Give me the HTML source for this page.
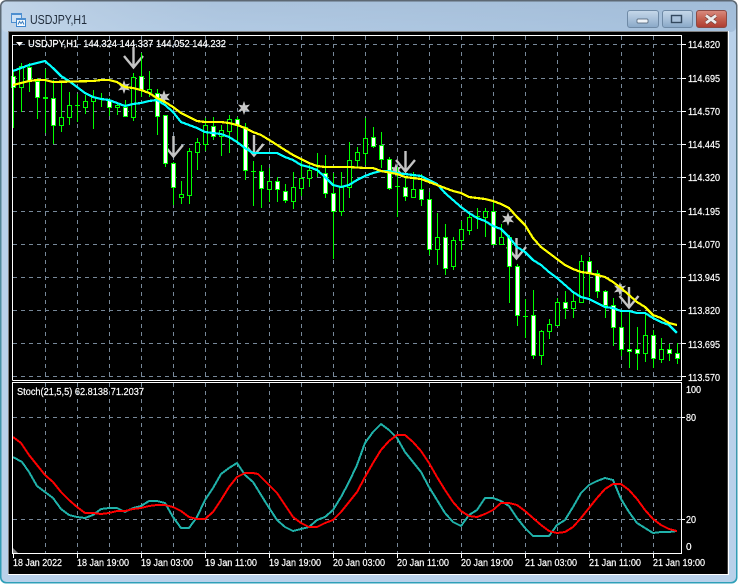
<!DOCTYPE html>
<html><head><meta charset="utf-8"><title>USDJPY,H1</title>
<style>
html,body{margin:0;padding:0;background:#fff;width:739px;height:584px;overflow:hidden}
svg{display:block}
text{font-family:"Liberation Sans",sans-serif;font-size:10px;fill:#fff;stroke:#fff;stroke-width:.2}
.g{stroke:#778899;stroke-width:1;stroke-dasharray:4 4;fill:none;shape-rendering:crispEdges}
</style></head><body>
<svg width="739" height="584" viewBox="0 0 739 584" xmlns="http://www.w3.org/2000/svg">
<defs>
<linearGradient id="tb" x1="0" y1="0" x2="0" y2="1"><stop offset="0" stop-color="#a9c1da"/><stop offset=".06" stop-color="#aec5de"/><stop offset="1" stop-color="#b9d1ea"/></linearGradient>
<linearGradient id="ti" x1="0" y1="0" x2="1" y2="0"><stop offset="0" stop-color="#c6d8ea" stop-opacity=".8"/><stop offset=".3" stop-color="#a9c2dc" stop-opacity=".5"/><stop offset="1" stop-color="#9db9d6" stop-opacity=".7"/></linearGradient>
<linearGradient id="bb" x1="0" y1="0" x2="0" y2="1"><stop offset="0" stop-color="#c6d8ea"/><stop offset=".5" stop-color="#a9c1da"/><stop offset="1" stop-color="#89a8c8"/></linearGradient>
<linearGradient id="cb" x1="0" y1="0" x2="0" y2="1"><stop offset="0" stop-color="#d98c80"/><stop offset=".5" stop-color="#c4604f"/><stop offset="1" stop-color="#ad3c30"/></linearGradient>
<linearGradient id="ed" x1="0" y1="0" x2="0" y2="1"><stop offset="0" stop-color="#5d6873"/><stop offset=".5" stop-color="#4f8ea0"/><stop offset="1" stop-color="#2f9fb8"/></linearGradient>
<polygon id="s" fill="#c8c8c8" points="0,-7 1.5,-2.6 6.06,-3.5 3,0 6.06,3.5 1.5,2.6 0,7 -1.5,2.6 -6.06,3.5 -3,0 -6.06,-3.5 -1.5,-2.6"/>
<path id="a" fill="none" stroke="#c4c4c4" stroke-width="2.4" d="M0 0V20M-9.5 9L0 20.5L9.5 9"/>
</defs>

<rect x="0" y="0" width="737.5" height="583.5" rx="6" fill="url(#ed)"/>
<rect x="1.500" y="1.500" width="734.500" height="580.500" rx="5" fill="#b9d1ea"/>
<rect x="1.500" y="1.500" width="734.500" height="30.500" rx="5" fill="url(#tb)"/>
<rect x="1.500" y="1.500" width="734.500" height="30.500" rx="5" fill="url(#ti)"/>

<!-- title icon -->
<g>
<rect x="11.5" y="13.5" width="10" height="9" fill="#cfe2f5" stroke="#4d8fd0"/>
<rect x="11" y="13" width="11" height="2" fill="#4d8fd0"/>
<rect x="16.5" y="18.5" width="9" height="8" fill="#f5fafe" stroke="#3d86cf"/>
<rect x="16" y="18" width="10" height="2" fill="#4d8fd0"/>
<path d="M18 24.5l1.5-3 1.5 2 1.5-2 1.5 3" fill="none" stroke="#3a7dbe" stroke-width="1"/>
</g>
<text x="30" y="24" style="font-size:12.5px;fill:#1f2b3a;stroke:none" textLength="57" lengthAdjust="spacingAndGlyphs">USDJPY,H1</text>

<!-- buttons -->
<rect x="627.5" y="10.5" width="31" height="17" rx="2.5" fill="url(#bb)" stroke="#6f8aa6"/>
<rect x="637" y="19" width="11" height="4" rx="1" fill="#eef3f8" stroke="#44586c" stroke-width=".7"/>
<rect x="662.5" y="10.5" width="30" height="17" rx="2.5" fill="url(#bb)" stroke="#6f8aa6"/>
<rect x="671.5" y="15.5" width="10" height="7" fill="#a9c1da" stroke="#33485e" stroke-width="1.4"/>
<rect x="696.5" y="10.5" width="30" height="17" rx="2.5" fill="url(#cb)" stroke="#8c4a44"/>
<path d="M706 15.500l10 7.500M716 15.500l-10 7.500" stroke="#6e3a36" stroke-width="4"/>
<path d="M706 15.500l10 7.500M716 15.500l-10 7.500" stroke="#ececec" stroke-width="2.8"/>

<!-- client area -->
<rect x="8" y="31" width="721" height="544" fill="#fff"/>
<rect x="8" y="31" width="720" height="543" fill="#808080"/>
<rect x="9" y="32" width="718.5" height="542" fill="#000"/>

<!-- grids -->
<path class="g" d="M13 44.500H681M13 78.500H681M13 111.500H681M13 144.500H681M13 177.500H681M13 211.500H681M13 244.500H681M13 277.500H681M13 310.500H681M13 343.500H681M13 376.500H681"/>
<path class="g" d="M45.500 36V380M77.500 36V380M109.500 36V380M141.500 36V380M173.500 36V380M205.500 36V380M237.500 36V380M269.500 36V380M301.500 36V380M333.500 36V380M365.500 36V380M397.500 36V380M429.500 36V380M461.500 36V380M493.500 36V380M525.500 36V380M557.500 36V380M589.500 36V380M621.500 36V380M653.500 36V380"/>
<path class="g" d="M13 417.500H681M13 519.500H681"/>
<path class="g" d="M45.500 383V553M77.500 383V553M109.500 383V553M141.500 383V553M173.500 383V553M205.500 383V553M237.500 383V553M269.500 383V553M301.500 383V553M333.500 383V553M365.500 383V553M397.500 383V553M429.500 383V553M461.500 383V553M493.500 383V553M525.500 383V553M557.500 383V553M589.500 383V553M621.500 383V553M653.500 383V553"/>

<!-- arrows and stars -->
<use href="#a" x="133.500" y="47"/><use href="#a" x="173.500" y="136"/><use href="#a" x="254" y="135"/><use href="#a" x="405.500" y="151"/><use href="#a" x="516.500" y="238"/><use href="#a" x="629" y="287"/>
<use href="#s" x="124" y="87"/><use href="#s" x="164" y="97"/><use href="#s" x="244" y="108"/><use href="#s" x="396" y="170"/><use href="#s" x="508" y="219"/><use href="#s" x="620" y="289"/>

<!-- wicks -->
<path fill="none" stroke="#00ff00" stroke-width="1" shape-rendering="crispEdges" d="M13.500 70V128M21.500 63V112M29.500 63V92M37.500 78V119M45.500 69V133M53.500 80V144M61.500 82V132M69.500 92V125M77.500 94V122M85.500 95V114M93.500 90V129M101.500 93V107M109.500 98V116M117.500 103V115M125.500 100V117M133.500 73V121M141.500 53V97M149.500 71V97M157.500 89V135M165.500 115V167M173.500 162V205M181.500 181V204M189.500 148V204M197.500 138V170M205.500 118V151M213.500 117V140M221.500 125V156M229.500 115V153M237.500 117V144M245.500 123V180M253.500 161V206M261.500 165V208M269.500 168V202M277.500 177V202M285.500 184V203M293.500 172V209M301.500 160V196M309.500 165V187M317.500 153V177M325.500 155V198M333.500 173V259M341.500 172V216M349.500 142V198M357.500 147V168M365.500 118V165M373.500 127V148M381.500 132V168M389.500 157V190M397.500 167V217M405.500 177V201M413.500 172V197M421.500 174V206M429.500 192V255M437.500 213V265M445.500 224V275M453.500 237V270M461.500 221V250M469.500 212V235M477.500 208V229M485.500 208V237M493.500 202V245M501.500 224V245M509.500 235V303M517.500 264V326M525.500 299V338M533.500 290V359M541.500 330V365M549.500 319V339M557.500 298V325M565.500 291V319M573.500 293V318M581.500 255V303M589.500 257V297M597.500 270V298M605.500 290V318M613.500 298V346M621.500 310V356M629.500 311V368M637.500 327V370M645.500 313V362M653.500 330V368M661.500 338V363M669.500 344V361M677.500 343V364"/>

<!-- hollow bodies -->
<path fill="#000" stroke="#00ff00" stroke-width="1" shape-rendering="crispEdges" d="M19.500 66.500h4V87.500h-4zM59.500 117.500h4V125.500h-4zM67.500 105.500h4V117.500h-4zM83.500 101.500h4V107.500h-4zM91.500 97.500h4V101.500h-4zM115.500 105.500h4V107.500h-4zM131.500 77.500h4V117.500h-4zM147.500 89.500h4V92.500h-4zM179.500 194.500h4V197.500h-4zM187.500 151.500h4V195.500h-4zM195.500 142.500h4V152.500h-4zM203.500 125.500h4V144.500h-4zM219.500 130.500h4V136.500h-4zM227.500 119.500h4V131.500h-4zM267.500 181.500h4V189.500h-4zM291.500 187.500h4V201.500h-4zM299.500 178.500h4V188.500h-4zM307.500 170.500h4V178.500h-4zM339.500 187.500h4V211.500h-4zM347.500 160.500h4V187.500h-4zM355.500 152.500h4V160.500h-4zM363.500 138.500h4V153.500h-4zM411.500 189.500h4V197.500h-4zM435.500 237.500h4V249.500h-4zM451.500 240.500h4V266.500h-4zM459.500 229.500h4V240.500h-4zM467.500 217.500h4V230.500h-4zM483.500 211.500h4V217.500h-4zM499.500 237.500h4V244.500h-4zM539.500 331.500h4V355.500h-4zM547.500 324.500h4V331.500h-4zM555.500 302.500h4V325.500h-4zM571.500 301.500h4V308.500h-4zM579.500 261.500h4V302.500h-4zM643.500 335.500h4V353.500h-4zM659.500 349.500h4V359.500h-4z"/>

<!-- filled bodies -->
<path fill="#fff" stroke="#00ff00" stroke-width="1" shape-rendering="crispEdges" d="M11.500 76.500h4V87.500h-4zM27.500 67.500h4V80.500h-4zM35.500 81.500h4V97.500h-4zM43.500 97.500h4V98.500h-4zM51.500 98.500h4V125.500h-4zM107.500 100.500h4V107.500h-4zM123.500 107.500h4V116.500h-4zM139.500 76.500h4V90.500h-4zM155.500 93.500h4V116.500h-4zM163.500 115.500h4V163.500h-4zM171.500 163.500h4V187.500h-4zM211.500 126.500h4V136.500h-4zM235.500 119.500h4V125.500h-4zM243.500 127.500h4V170.500h-4zM259.500 171.500h4V188.500h-4zM275.500 181.500h4V189.500h-4zM283.500 191.500h4V200.500h-4zM323.500 173.500h4V193.500h-4zM331.500 193.500h4V211.500h-4zM371.500 137.500h4V146.500h-4zM379.500 145.500h4V159.500h-4zM387.500 159.500h4V188.500h-4zM403.500 187.500h4V196.500h-4zM419.500 189.500h4V199.500h-4zM427.500 199.500h4V249.500h-4zM443.500 237.500h4V268.500h-4zM491.500 211.500h4V244.500h-4zM507.500 237.500h4V266.500h-4zM515.500 266.500h4V315.500h-4zM531.500 315.500h4V355.500h-4zM563.500 302.500h4V308.500h-4zM587.500 261.500h4V273.500h-4zM595.500 273.500h4V291.500h-4zM603.500 291.500h4V305.500h-4zM611.500 305.500h4V327.500h-4zM619.500 327.500h4V349.500h-4zM627.500 349.500h4V351.500h-4zM635.500 349.500h4V353.500h-4zM651.500 335.500h4V358.500h-4zM667.500 349.500h4V353.500h-4zM675.500 353.500h4V358.500h-4z"/>
<path stroke="#00ff00" stroke-width="1" fill="none" shape-rendering="crispEdges" d="M75 105.500h5M251 171.500h5M315 170.500h5M395 186.500h5M475 216.500h5M523 316.500h5"/>

<!-- MA lines -->
<polyline fill="none" stroke="#00ffff" stroke-width="2.2" shape-rendering="crispEdges" points="13,71 21,68 29,65 37,63 45,61 53,68 61,76 69,81 77,87 85,93 93,97 101,99 109,100 117,103 125,106 133,104 141,103 149,101 157,100 165,105 173,112 181,122 189,125 197,128 205,132 213,133 221,134 229,137 237,142 245,148 253,153 261,153 277,153 285,157 293,160 301,165 309,167 317,170 325,177 333,185 341,187 349,185 357,180 365,176 373,173 381,171 389,171 397,173 405,174 413,175 421,176 429,180 437,184 445,193 453,200 461,207 469,213 477,218 485,221 493,226 501,229 509,237 517,247 525,252 533,260 541,265 549,272 557,278 565,285 573,292 581,297 589,299 597,303 605,307 613,308 621,311 629,311 637,313 645,313 653,318 661,322 669,325 677,333"/>
<polyline fill="none" stroke="#ffff00" stroke-width="2.2" shape-rendering="crispEdges" points="13,85 21,83 29,81 37,80 45,80 53,82 93,81 101,80 109,80 117,82 125,87 133,88 141,90 149,93 157,98 165,102 173,107 181,113 189,117 197,121 205,122 221,122 229,123 237,125 245,128 253,132 261,135 266,138 274,143 285,150 293,155 301,159 309,163 317,166 325,167 349,167 365,168 373,168 381,171 397,174 405,177 421,179 429,182 437,185 445,188 453,191 461,193 469,197 477,198 485,199 493,201 501,204 509,208 517,217 525,225 533,238 541,247 549,253 557,259 565,265 573,269 581,272 589,273 597,275 605,277 613,282 621,288 629,295 637,302 645,307 653,315 661,318 669,323 677,325"/>

<!-- Stochastic -->
<polyline fill="none" stroke="#20b2aa" stroke-width="2" shape-rendering="crispEdges" points="13,457 22,462 29,472 37,486 45,492 53,498 61,509 69,515 77,517 85,518 93,515 101,509 109,508 117,508 125,512 133,508 141,506 149,501 157,501 165,503 173,517 181,528 189,528 197,517 205,500 213,488 221,474 229,468 237,463 245,475 253,482 258,490 266,503 277,520 285,527 293,531 301,529 309,527 317,520 325,517 333,510 341,497 349,482 357,465 365,443 373,432 381,424 389,430 397,438 405,452 413,462 421,472 429,487 437,500 445,513 453,522 461,526 469,515 477,510 485,498 493,498 501,501 509,506 517,518 525,528 533,536 549,536 557,525 565,520 573,507 581,493 589,485 597,481 605,478 613,480 621,499 629,512 637,523 645,528 653,533 661,532 669,532 677,531"/>
<polyline fill="none" stroke="#ff0000" stroke-width="2" shape-rendering="crispEdges" points="13,437 21,443 29,455 37,465 45,475 53,482 61,492 69,500 77,507 85,513 93,513 101,514 109,513 117,511 125,511 133,509 141,508 149,506 157,505 165,505 173,507 181,511 189,517 197,519 205,519 213,512 221,500 229,487 237,477 245,473 253,473 258,474 266,482 277,493 285,505 293,517 301,523 309,527 317,527 325,523 333,520 341,512 349,502 357,492 365,477 373,463 381,450 389,441 397,435 405,435 413,442 421,451 429,463 437,477 445,490 453,502 461,511 469,516 477,517 485,514 493,510 501,503 509,503 517,505 525,511 533,518 541,525 549,531 557,533 565,532 573,527 581,518 589,508 597,498 605,489 613,484 621,484 629,490 637,499 645,510 653,519 661,525 669,529 677,531"/>

<!-- frames -->
<path fill="none" stroke="#fff" stroke-width="1" shape-rendering="crispEdges" d="M12.500 380.500V35.500H681.500V380.500H12.500M12.500 382.500H681.500V553.500H12.500Z"/>
<path fill="#808080" d="M13 548L18 553H13Z"/>
<path fill="#fff" d="M16 42h7l-3.500 4z"/>

<!-- ticks -->
<path fill="none" stroke="#fff" stroke-width="1" shape-rendering="crispEdges" d="M682 44.500h4M682 78.500h4M682 111.500h4M682 144.500h4M682 177.500h4M682 211.500h4M682 244.500h4M682 277.500h4M682 310.500h4M682 343.500h4M682 376.500h4M682 417.500h3M682 519.500h3M13.500 554v4M77.500 554v4M141.500 554v4M205.500 554v4M269.500 554v4M333.500 554v4M397.500 554v4M461.500 554v4M525.500 554v4M589.500 554v4M653.500 554v4"/>

<!-- labels -->
<text x="28" y="47" textLength="198" lengthAdjust="spacingAndGlyphs" xml:space="preserve">USDJPY,H1  144.324 144.337 144.052 144.232</text>
<text x="17" y="395" textLength="127" lengthAdjust="spacingAndGlyphs">Stoch(21,5,5) 62.8138 71.2037</text>
<g>
<text x="688" y="48" textLength="32" lengthAdjust="spacingAndGlyphs">114.820</text>
<text x="688" y="82" textLength="32" lengthAdjust="spacingAndGlyphs">114.695</text>
<text x="688" y="115" textLength="32" lengthAdjust="spacingAndGlyphs">114.570</text>
<text x="688" y="148" textLength="32" lengthAdjust="spacingAndGlyphs">114.445</text>
<text x="688" y="181" textLength="32" lengthAdjust="spacingAndGlyphs">114.320</text>
<text x="688" y="215" textLength="32" lengthAdjust="spacingAndGlyphs">114.195</text>
<text x="688" y="248" textLength="32" lengthAdjust="spacingAndGlyphs">114.070</text>
<text x="688" y="281" textLength="32" lengthAdjust="spacingAndGlyphs">113.945</text>
<text x="688" y="314" textLength="32" lengthAdjust="spacingAndGlyphs">113.820</text>
<text x="688" y="348" textLength="32" lengthAdjust="spacingAndGlyphs">113.695</text>
<text x="688" y="381" textLength="32" lengthAdjust="spacingAndGlyphs">113.570</text>
<text x="686" y="393" textLength="15" lengthAdjust="spacingAndGlyphs">100</text>
<text x="686" y="421" textLength="10" lengthAdjust="spacingAndGlyphs">80</text>
<text x="686" y="523" textLength="10" lengthAdjust="spacingAndGlyphs">20</text>
<text x="686" y="550">0</text>
</g>
<g>
<text x="13" y="566" textLength="49" lengthAdjust="spacingAndGlyphs">18 Jan 2022</text>
<text x="77" y="566" textLength="52" lengthAdjust="spacingAndGlyphs">18 Jan 19:00</text>
<text x="141" y="566" textLength="52" lengthAdjust="spacingAndGlyphs">19 Jan 03:00</text>
<text x="205" y="566" textLength="52" lengthAdjust="spacingAndGlyphs">19 Jan 11:00</text>
<text x="269" y="566" textLength="52" lengthAdjust="spacingAndGlyphs">19 Jan 19:00</text>
<text x="333" y="566" textLength="52" lengthAdjust="spacingAndGlyphs">20 Jan 03:00</text>
<text x="397" y="566" textLength="52" lengthAdjust="spacingAndGlyphs">20 Jan 11:00</text>
<text x="461" y="566" textLength="52" lengthAdjust="spacingAndGlyphs">20 Jan 19:00</text>
<text x="525" y="566" textLength="52" lengthAdjust="spacingAndGlyphs">21 Jan 03:00</text>
<text x="589" y="566" textLength="52" lengthAdjust="spacingAndGlyphs">21 Jan 11:00</text>
<text x="653" y="566" textLength="52" lengthAdjust="spacingAndGlyphs">21 Jan 19:00</text>
</g>
</svg>
</body></html>
